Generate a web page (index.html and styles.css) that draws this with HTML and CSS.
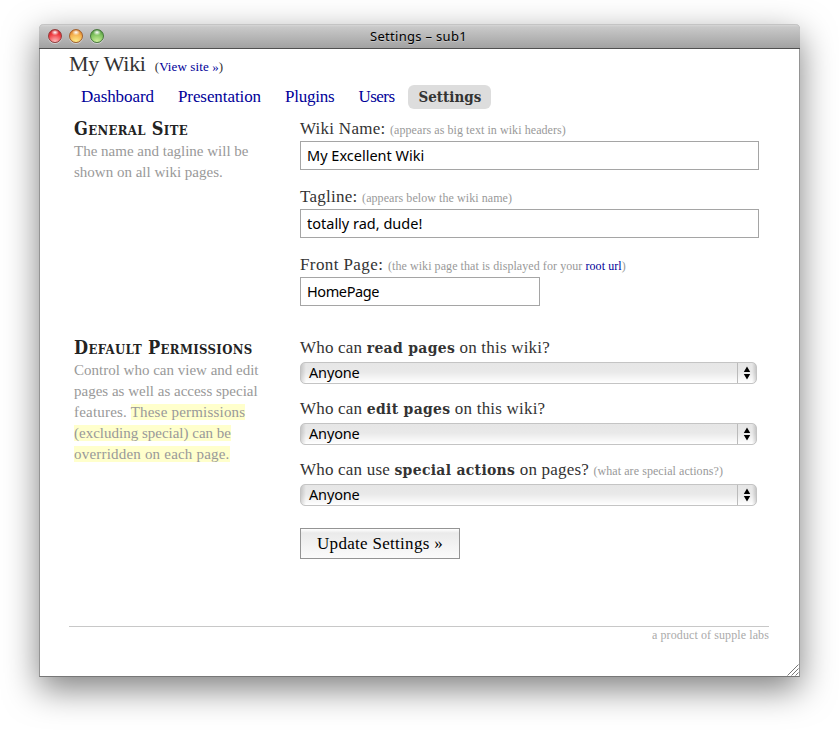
FILE: index.html
```html
<!DOCTYPE html>
<html lang="en">
<head>
<meta charset="utf-8">
<title>Settings – sub1</title>
<link rel="stylesheet" href="styles.css">
</head>
<body>
<div class="window">
  <div class="titlebar">
    <div class="lights">
      <span class="light red"></span>
      <span class="light amber"></span>
      <span class="light green"></span>
    </div>
    <span class="window-title">Settings – sub1</span>
  </div>
  <div class="page">
    <header class="site">
      <h1>My Wiki</h1>
      <span class="view">(<a href="#">View site »</a>)</span>
    </header>
    <nav class="tabs">
      <a href="#">Dashboard</a>
      <a href="#">Presentation</a>
      <a href="#" class="plugins">Plugins</a>
      <a href="#" class="users">Users</a>
      <a href="#" class="current">Settings</a>
    </nav>
    <section class="group general">
      <div class="about">
        <h2>General Site</h2>
        <p>The name and tagline will be<br>shown on all wiki pages.</p>
      </div>
      <div class="fields">
        <div class="field">
          <label for="name">Wiki Name: <small>(appears as big text in wiki headers)</small></label>
          <input id="name" type="text" value="My Excellent Wiki">
        </div>
        <div class="field">
          <label for="tagline">Tagline: <small>(appears below the wiki name)</small></label>
          <input id="tagline" type="text" value="totally rad, dude!">
        </div>
        <div class="field">
          <label for="front" class="wide">Front Page: <small>(the wiki page that is displayed for your <a href="#">root url</a>)</small></label>
          <input id="front" class="short" type="text" value="HomePage">
        </div>
      </div>
    </section>
    <section class="group">
      <div class="about">
        <h2>Default Permissions</h2>
        <p>Control who can view and edit<br>pages as well as access special<br><span class="loose">features. <mark>These permissions</mark></span><br><mark>(excluding special) can be<br><span class="loose">overridden on each page.</span></mark></p>
      </div>
      <div class="fields">
        <div class="field choice">
          <div class="question">Who can <b>read pages</b> on this wiki?</div>
          <div class="popup"><span>Anyone</span><svg width="8" height="14" viewBox="0 0 8 14"><path d="M4 .5 7.2 6H.8zM4 13.5.8 8h6.4z"/></svg></div>
        </div>
        <div class="field choice">
          <div class="question">Who can <b>edit pages</b> on this wiki?</div>
          <div class="popup"><span>Anyone</span><svg width="8" height="14" viewBox="0 0 8 14"><path d="M4 .5 7.2 6H.8zM4 13.5.8 8h6.4z"/></svg></div>
        </div>
        <div class="field choice">
          <div class="question">Who can use <b>special actions</b> on pages? <small>(what are special actions?)</small></div>
          <div class="popup"><span>Anyone</span><svg width="8" height="14" viewBox="0 0 8 14"><path d="M4 .5 7.2 6H.8zM4 13.5.8 8h6.4z"/></svg></div>
        </div>
        <button type="submit">Update Settings »</button>
      </div>
    </section>
    <footer>a product of supple labs</footer>
  </div>
  <svg class="grip" width="12" height="12" viewBox="0 0 12 12"><path d="M.5 11.5l11-11M4.5 11.5l7-7M8.5 11.5l3-3"/></svg>
</div>
</body>
</html>
```
FILE: styles.css
```css
* { box-sizing: border-box; }

body {
  margin: 0;
  min-height: 731px;
  padding: 24px 0 0 39px;
  background: #fff;
  color: #333;
  font: 17px/24px "Liberation Serif", serif;
}

a { color: #009; text-decoration: none; }

.window {
  position: relative;
  width: 761px;
  height: 653px;
  border: 1px solid #949494;
  border-top: 0;
  border-bottom-color: #777;
  border-radius: 5px 5px 0 0;
  background: #fff;
  box-shadow: 0 12px 34px rgba(0, 0, 0, .5);
}

.titlebar {
  display: flex;
  align-items: center;
  justify-content: center;
  position: relative;
  height: 25px;
  margin: 0 -1px;
  border-top: 1px solid #c4c4c4;
  border-bottom: 1px solid #505050;
  border-radius: 5px 5px 0 0;
  background: linear-gradient(#d6d6d6, #c9c9c9 2px, #a2a2a2);
}

.window-title {
  color: #000;
  font: 13px/23px "Noto Sans", sans-serif;
  letter-spacing: .3px;
  margin-right: 2px;
  text-shadow: 0 1px 0 rgba(255, 255, 255, .3);
}

.lights {
  position: absolute;
  left: 9px;
  top: 4px;
  display: flex;
  gap: 7px;
}

.light {
  width: 14px;
  height: 14px;
  border-radius: 50%;
  box-shadow: 0 1px 0 rgba(255, 255, 255, .45);
}
.red { border: 1px solid #933b3b; background: radial-gradient(ellipse 4px 3px at 50% 20%, #fff, rgba(255,255,255,0)), radial-gradient(circle at 50% 100%, #ffc2c2, #f03c42 60%, #b5141a); }
.amber { border: 1px solid #a2602c; background: radial-gradient(ellipse 4px 3px at 50% 20%, #fff, rgba(255,255,255,0)), radial-gradient(circle at 50% 100%, #fff28e, #f5b04e 60%, #c8600f); }
.green { border: 1px solid #47783b; background: radial-gradient(ellipse 4px 3px at 50% 20%, #fff, rgba(255,255,255,0)), radial-gradient(circle at 50% 100%, #d3f5a0, #7fc25e 60%, #347c28); }

.page { width: 700px; margin-left: 29px; }

.site { display: flex; align-items: baseline; gap: 9px; height: 30px; }
.site h1 {
  margin: 0;
  font-size: 22px;
  line-height: 30px;
  font-weight: normal;
  letter-spacing: -.3px;
}
.view { font-size: 13px; letter-spacing: .11px; }

.tabs { display: flex; gap: 4px; margin: 6px 0 8px; padding-left: 2px; }
.tabs a { padding: 0 10px; border-radius: 6px; letter-spacing: -.08px; }
.tabs .plugins { letter-spacing: -.22px; }
.tabs .users { letter-spacing: -.55px; }
.tabs .current {
  background: #ddd;
  color: #333;
  font: bold 15px/24px "DejaVu Serif Condensed", serif;
  letter-spacing: 0;
}

.group { display: grid; grid-template-columns: 226px 459px; padding-left: 5px; }
.general { height: 219px; }

h2 {
  margin: 0;
  color: #222;
  font: bold small-caps 18px/24px "DejaVu Serif Condensed", serif;
  letter-spacing: .35px;
}
.about p { margin: 0; color: #999; font-size: 15px; line-height: 21px; white-space: nowrap; }
mark { background: #ffc; color: inherit; }
.loose { letter-spacing: .2px; }
.general .about h2, .group .about h2 { height: 24px; }

.field { margin-bottom: 14px; }
.field label { display: block; height: 24px; letter-spacing: .26px; }
.field .wide { letter-spacing: .4px; }
small { color: #999; font-size: 12px; letter-spacing: .07px; }

input {
  display: block;
  width: 459px;
  height: 29px;
  padding: 0 6px 2px;
  border: 1px solid #a5a5a5;
  background: #fff;
  color: #000;
  font: 14.5px/25px "Noto Sans", sans-serif;
}
.fields .field { height: 54px; }
input.short { width: 240px; letter-spacing: -.4px; }

.fields .choice { height: 49px; margin-bottom: 12px; }
.question { height: 26px; letter-spacing: .2px; white-space: nowrap; }
.question b {
  font: bold 15.5px/20px "DejaVu Serif Condensed", serif;
  letter-spacing: .32px;
}

.popup {
  display: flex;
  width: 457px;
  height: 22px;
  justify-content: space-between;
  padding-left: 8px;
  border: 1px solid #c4c4c4;
  border-radius: 5px;
  background: linear-gradient(90deg, rgba(0,0,0,.14), transparent 5px, transparent 451px, rgba(0,0,0,.14)), linear-gradient(#e6e6e6, #e9e9e9 45%, #fff);
  color: #000;
  font: 14.5px/19px "Noto Sans", sans-serif;
  letter-spacing: -.15px;
}
.popup svg {
  box-sizing: content-box;
  height: 14px;
  padding: 3px 5px;
  border-left: 1px solid #bbb;
}

button {
  display: block;
  width: 160px;
  height: 31px;
  margin-top: 21px;
  padding: 0;
  border: 1px solid #949494;
  background: linear-gradient(#fff, #eaeaea 4px, #fbfbfb);
  color: #000;
  font: 17px/29px "Liberation Serif", serif;
  letter-spacing: .3px;
}

footer {
  margin-top: 67px;
  border-top: 1px solid #c8c8c8;
  color: #aaa;
  font-size: 12px;
  line-height: 17px;
  letter-spacing: .1px;
  text-align: right;
}

.grip { position: absolute; right: 0; bottom: 0; fill: none; stroke: #777; }
```
